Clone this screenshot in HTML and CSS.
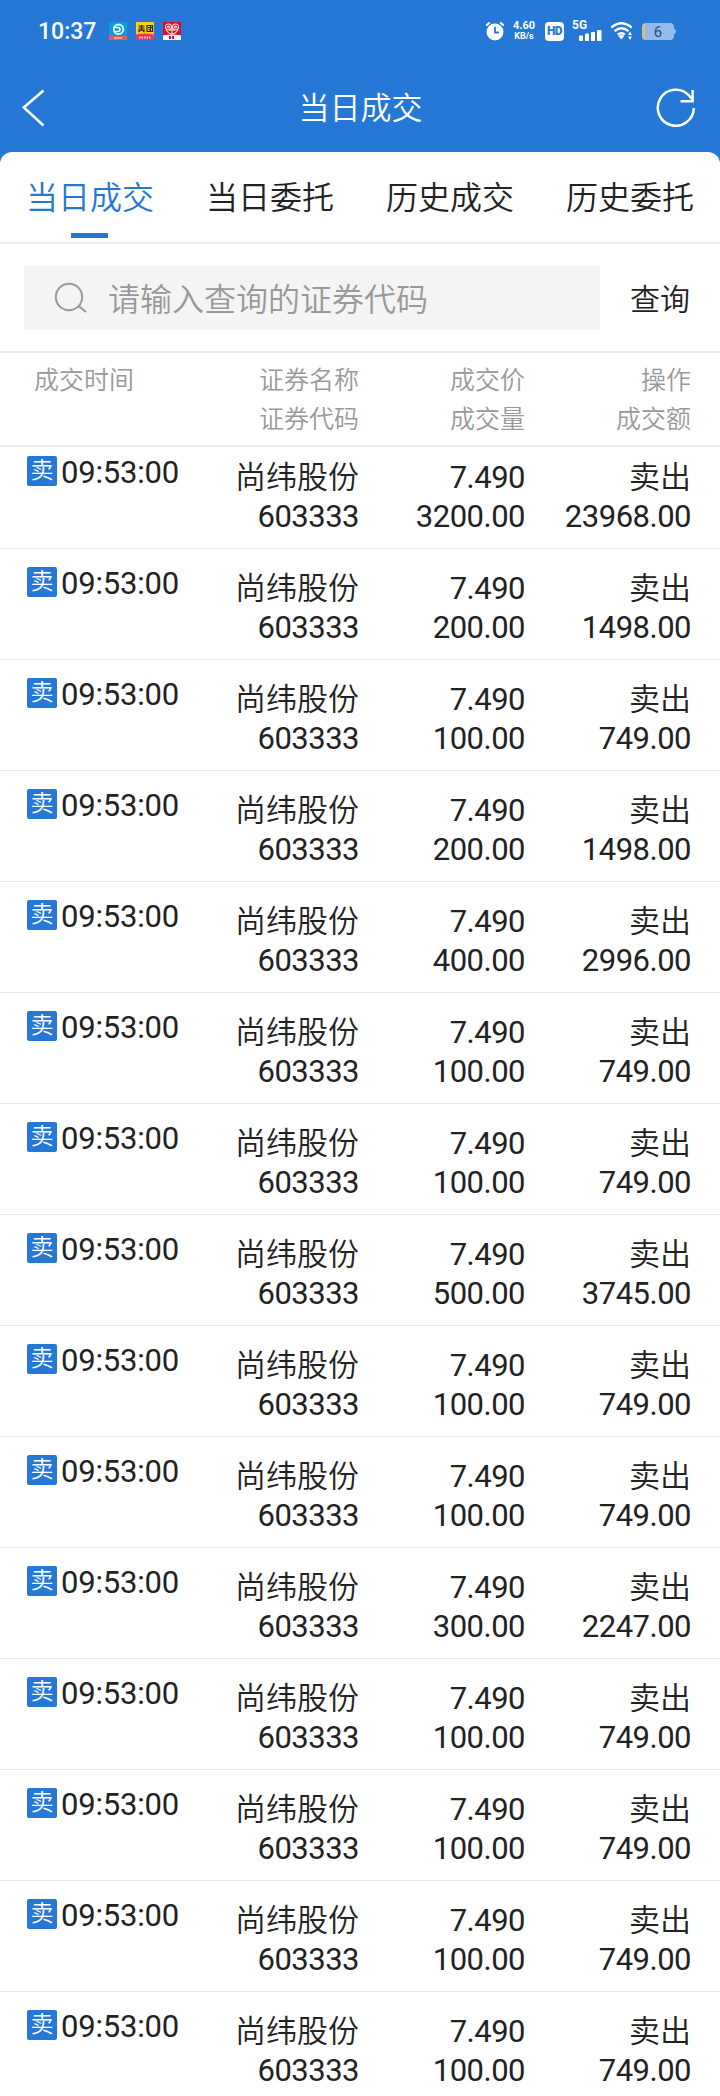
FILE: index.html
```html
<!DOCTYPE html>
<html lang="zh-CN">
<head>
<meta charset="utf-8">
<title>当日成交</title>
<link rel="stylesheet" href="styles.css">
</head>
<body>
<div class="status">
  <span class="clock">10:37</span>
  <svg class="app" viewBox="0 0 18 18"><rect width="18" height="18" fill="#1599d6"/><rect y="14" width="18" height="4" fill="#ea5a50"/><path d="M5 16h8" stroke="#f7b9a8" stroke-width="1.5"/><circle cx="9.500" cy="7.300" r="4.800" fill="none" stroke="#e8f8ff" stroke-width="1.800"/><path d="M4 5.500h5q2 0 2 2t-2 2H5" stroke="#e8f8ff" stroke-width="1.600" fill="none"/></svg>
  <svg class="app" viewBox="0 0 18 18"><rect width="18" height="18" fill="#f9d21b"/><path d="M0 12.500q9-2 18 0V18H0z" fill="#f0355c"/><path d="M2.500 4h6M2.500 6h6M2 8h7M5.500 3v5M5.500 7.500l-3 2.500M5.500 7.500l3 2.500M11 3.500h5.500v6H11zM12 5.500h4M14.500 4v4.500l-2-1" stroke="#33260a" stroke-width="1.200" fill="none"/><path d="M3 15.500h12" stroke="#ffc6d0" stroke-width="2" stroke-dasharray="1.500 1"/></svg>
  <svg class="app" viewBox="0 0 18 18"><rect width="18" height="18" fill="#d3122a"/><path d="M0 13.500q9-2 18 0V18H0z" fill="#fff"/><g fill="none" stroke="#ffd9d9" stroke-width="1.100"><circle cx="5.500" cy="5" r="3"/><circle cx="12.500" cy="5" r="3"/><circle cx="5.500" cy="5" r="1"/><circle cx="12.500" cy="5" r="1"/><path d="M3 8q6 8 12 0M6 8h6M9 4v8"/></g><path d="M6 15.500h6" stroke="#d3122a" stroke-width="3" stroke-dasharray="2 1"/></svg>
  <div class="indicators">
    <svg class="alarm" viewBox="0 0 20 20"><circle cx="10" cy="11" r="8.500" fill="#fff"/><path d="M1.200 4.500l3.600-3M18.800 4.500l-3.600-3" stroke="#fff" stroke-width="2"/><path d="M10 6v5.500h4" fill="none" stroke="#2578d6" stroke-width="1.800"/></svg>
    <span class="speed"><b>4.60</b><small>KB/s</small></span>
    <span class="hd">HD</span>
    <span class="signal"><b>5G</b><svg viewBox="0 0 23 11"><path d="M0 6.500q0-1 1-1h2q1 0 1 1V11H0zM6 4.500q0-1 1-1h2q1 0 1 1V11H6zM12 3q0-1 1-1h2q1 0 1 1v8h-4zM18 1q0-1 1-1h2.500q1 0 1 1v10H18z" fill="#fff"/></svg></span>
    <svg class="wifi" viewBox="0 0 22 18"><g fill="none" stroke="#fff" stroke-width="2.400"><path d="M.8 5.500q10-8.500 20.400 0M4 9.200q7-5.800 14 0M7.300 12.700q3.700-3 7 0"/></g><path d="M7.800 14q3-2 6 0L10.800 17.500z" fill="#fff"/><path d="M17.500 13l2-3.500 2 3.500zM17.500 14.500l2 3.500 2-3.500z" fill="#fff"/></svg>
    <span class="battery">6</span>
  </div>
</div>
<header class="titlebar">
  <svg class="back" viewBox="0 0 24 38"><path d="M21.500 1.500L1.800 18.500L21.500 36.500" fill="none" stroke="#fff" stroke-width="2.600"/></svg>
  <h1>当日成交</h1>
  <svg class="refresh" viewBox="0 0 40 40"><g fill="none" stroke="#fff" stroke-width="2.500"><path d="M37.800 20A18 18 0 1 1 33 7.500L36 11"/><path d="M24.500 13.300H36.600V2"/></g></svg>
</header>
<main>
  <nav class="tabs">
    <a class="active">当日成交</a><a>当日委托</a><a>历史成交</a><a>历史委托</a>
  </nav>
  <div class="search">
    <div class="field"><svg viewBox="0 0 34 32"><circle cx="15" cy="15" r="13.200" fill="none" stroke="#999" stroke-width="2"/><path d="M24 23.500l8 6.500" stroke="#999" stroke-width="2.200"/></svg><span>请输入查询的证券代码</span></div>
    <span class="query">查询</span>
  </div>
  <div class="grid head"><div class="time">成交时间</div><div>证券名称<br>证券代码</div><div>成交价<br>成交量</div><div>操作<br>成交额</div></div>
  <div class="rows">
    <div class="grid row"><div class="time"><i>卖</i>09:53:00</div><div>尚纬股份<p>603333</p></div><div><p>7.490</p><p>3200.00</p></div><div>卖出<p>23968.00</p></div></div>
    <div class="grid row"><div class="time"><i>卖</i>09:53:00</div><div>尚纬股份<p>603333</p></div><div><p>7.490</p><p>200.00</p></div><div>卖出<p>1498.00</p></div></div>
    <div class="grid row"><div class="time"><i>卖</i>09:53:00</div><div>尚纬股份<p>603333</p></div><div><p>7.490</p><p>100.00</p></div><div>卖出<p>749.00</p></div></div>
    <div class="grid row"><div class="time"><i>卖</i>09:53:00</div><div>尚纬股份<p>603333</p></div><div><p>7.490</p><p>200.00</p></div><div>卖出<p>1498.00</p></div></div>
    <div class="grid row"><div class="time"><i>卖</i>09:53:00</div><div>尚纬股份<p>603333</p></div><div><p>7.490</p><p>400.00</p></div><div>卖出<p>2996.00</p></div></div>
    <div class="grid row"><div class="time"><i>卖</i>09:53:00</div><div>尚纬股份<p>603333</p></div><div><p>7.490</p><p>100.00</p></div><div>卖出<p>749.00</p></div></div>
    <div class="grid row"><div class="time"><i>卖</i>09:53:00</div><div>尚纬股份<p>603333</p></div><div><p>7.490</p><p>100.00</p></div><div>卖出<p>749.00</p></div></div>
    <div class="grid row"><div class="time"><i>卖</i>09:53:00</div><div>尚纬股份<p>603333</p></div><div><p>7.490</p><p>500.00</p></div><div>卖出<p>3745.00</p></div></div>
    <div class="grid row"><div class="time"><i>卖</i>09:53:00</div><div>尚纬股份<p>603333</p></div><div><p>7.490</p><p>100.00</p></div><div>卖出<p>749.00</p></div></div>
    <div class="grid row"><div class="time"><i>卖</i>09:53:00</div><div>尚纬股份<p>603333</p></div><div><p>7.490</p><p>100.00</p></div><div>卖出<p>749.00</p></div></div>
    <div class="grid row"><div class="time"><i>卖</i>09:53:00</div><div>尚纬股份<p>603333</p></div><div><p>7.490</p><p>300.00</p></div><div>卖出<p>2247.00</p></div></div>
    <div class="grid row"><div class="time"><i>卖</i>09:53:00</div><div>尚纬股份<p>603333</p></div><div><p>7.490</p><p>100.00</p></div><div>卖出<p>749.00</p></div></div>
    <div class="grid row"><div class="time"><i>卖</i>09:53:00</div><div>尚纬股份<p>603333</p></div><div><p>7.490</p><p>100.00</p></div><div>卖出<p>749.00</p></div></div>
    <div class="grid row"><div class="time"><i>卖</i>09:53:00</div><div>尚纬股份<p>603333</p></div><div><p>7.490</p><p>100.00</p></div><div>卖出<p>749.00</p></div></div>
    <div class="grid row"><div class="time"><i>卖</i>09:53:00</div><div>尚纬股份<p>603333</p></div><div><p>7.490</p><p>100.00</p></div><div>卖出<p>749.00</p></div></div>
  </div>
</main>
</body>
</html>
```
FILE: styles.css
```css
* { box-sizing: border-box; }
body {
  margin: 0;
  width: 720px;
  height: 2096px;
  overflow: hidden;
  background: #2578d6;
  color: #222;
  font-family: Roboto, "Noto Sans CJK SC", sans-serif;
  font-weight: 350;
}
svg { display: block; flex: none; }
.status { display: flex; align-items: center; height: 62px; padding: 0 29px 0 38px; color: #fff; }
.clock { width: 71px; font-size: 23px; font-weight: 500; line-height: 28px; padding-top: 2px; }
.app { width: 18px; height: 18px; margin-right: 9px; }
.indicators { display: flex; align-items: center; margin-left: auto; width: 206px; }
.alarm { width: 20px; height: 20px; margin-right: 8px; }
.speed { display: flex; flex-direction: column; align-items: center; width: 22px; margin-right: 10px; line-height: 10px; }
.speed b { font-size: 11px; font-weight: 700; }
.speed small { font-size: 9px; font-weight: 700; }
.hd { width: 19px; height: 19px; margin-right: 8px; border-radius: 4px; background: #fff; color: #2578d6; font-size: 12px; font-weight: 900; line-height: 19px; text-align: center; letter-spacing: -.5px; }
.signal { display: flex; flex-direction: column; width: 30px; height: 20px; margin-right: 8px; }
.signal b { font-size: 12px; font-weight: 700; line-height: 9px; }
.signal svg { width: 23px; height: 11px; margin-left: 7px; }
.wifi { width: 23px; height: 18px; margin-right: 9px; }
.battery { position: relative; width: 32px; height: 17px; border-radius: 4px; background: linear-gradient(90deg, #d8c17c 3px, #94bcea 3px); color: #2b4c72; font-size: 15px; font-weight: 400; line-height: 18px; text-align: center; }
.battery::after { content: ""; position: absolute; left: 32px; top: 6px; width: 2px; height: 5px; background: #94bcea; border-radius: 0 2px 2px 0; }
.titlebar { display: grid; grid-template-columns: 40px 1fr 40px; align-items: center; height: 90px; padding: 0 24px 0 22px; }
.titlebar h1 { margin: 4px 0 0; padding-left: 3px; text-align: center; color: #fff; font-size: 31px; font-weight: 350; line-height: 40px; }
.back { width: 24px; height: 38px; margin-top: 1px; }
.refresh { width: 40px; height: 40px; margin-top: 2px; }
main { height: 1944px; background: #fff; border-radius: 12px 12px 0 0; }
.tabs { display: flex; height: 92px; border-bottom: 2px solid #ebebeb; font-size: 32px; line-height: 92px; text-align: center; }
.tabs a { flex: 1; }
.tabs .active { color: #2578d0; display: flex; flex-direction: column; align-items: center; line-height: 81px; padding-top: 6px; height: 86px; }
.tabs .active::after { content: ""; width: 37px; height: 5px; margin: -6px 1px 0 0; flex: none; background: #2578d0; }
.search { display: flex; align-items: center; height: 109px; padding: 0 0 0 24px; border-bottom: 2px solid #ebebeb; }
.field { display: flex; align-items: center; width: 576px; height: 64px; padding-left: 30px; background: #f4f4f4; color: #999; font-size: 32px; }
.field svg { width: 34px; height: 32px; margin-right: 20px; }
.field span { margin-top: -2px; }
.query { width: 120px; margin-top: -2px; font-size: 30px; text-align: center; }
.grid { display: grid; grid-template-columns: 193px 166px 166px 166px; text-align: right; line-height: 39px; }
.head { height: 94px; padding-top: 8px; border-bottom: 2px solid #ebebeb; color: #999; font-size: 25px; }
.time { text-align: left; }
.head .time { padding-left: 34px; }
.row { height: 111px; padding-top: 20px; border-bottom: 1px solid #e8e8e8; font-size: 31px; }
.row:first-child { height: 102px; padding-top: 11px; }
.row p { margin: 0; font-weight: 400; letter-spacing: -.5px; }
.row .time { display: flex; padding-left: 27px; margin-top: -1px; font-weight: 400; letter-spacing: -.2px; line-height: 31px; }
.row i { width: 30px; height: 30px; margin: -1px 4px 0 0; border-radius: 2px; background: #2578d6; color: #fff; font-size: 23px; font-style: normal; font-weight: 350; line-height: 30px; text-align: center; }
```
